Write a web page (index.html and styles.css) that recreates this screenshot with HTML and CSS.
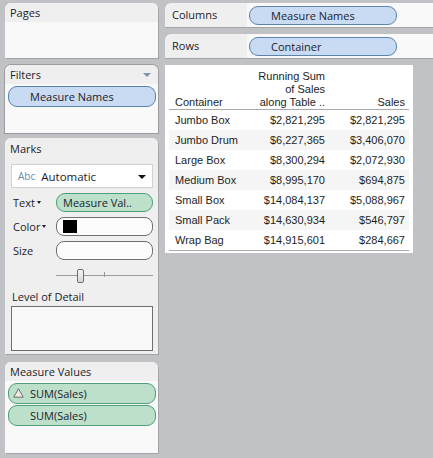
FILE: index.html
```html
<!DOCTYPE html>
<html>
<head>
<meta charset="utf-8">
<link rel="stylesheet" href="styles.css">
</head>
<body>
<div class="app">
  <div class="left">
    <section class="card pages">
      <div class="card-h">Pages</div>
      <div class="card-b"></div>
    </section>
    <section class="card filters">
      <div class="card-h">Filters<span class="hdr-tri"></span></div>
      <div class="card-b">
        <div class="pill blue wide">Measure Names</div>
      </div>
    </section>
    <section class="card marks">
      <div class="card-h">Marks</div>
      <div class="dropdown"><span class="abc">Abc</span><span class="dd-text">Automatic</span><span class="dd-tri"></span></div>
      <div class="mrow"><span class="mlabel">Text<span class="small-tri"></span></span><div class="pill green short">Measure Val..</div></div>
      <div class="mrow"><span class="mlabel">Color<span class="small-tri"></span></span><div class="slot"><span class="swatch"></span></div></div>
      <div class="mrow"><span class="mlabel">Size</span><div class="slot"></div></div>
      <div class="slider"><span class="track"></span><span class="tick"></span><span class="thumb"></span></div>
      <div class="lod-label">Level of Detail</div>
      <div class="lod-box"></div>
    </section>
    <section class="card mv">
      <div class="card-h">Measure Values</div>
      <div class="card-b mv-b">
        <div class="pill green wide"><svg class="delta" width="11" height="10" viewBox="0 0 11 10"><path d="M5.5 0.8 L10.3 9.2 L0.7 9.2 Z" fill="#ecebe2" stroke="#6f6f6f" stroke-width="1"/></svg>SUM(Sales)</div>
        <div class="pill green wide">SUM(Sales)</div>
      </div>
    </section>
  </div>
  <div class="right">
    <div class="shelf">
      <div class="shelf-l">Columns</div>
      <div class="shelf-b"><div class="pill blue shelf-pill">Measure Names</div></div>
    </div>
    <div class="shelf">
      <div class="shelf-l">Rows</div>
      <div class="shelf-b"><div class="pill blue shelf-pill">Container</div></div>
    </div>
    <div class="table-wrap">
      <table class="data">
        <thead>
          <tr><th class="c1">Container</th><th class="c2">Running Sum<br>of Sales<br>along Table ..</th><th class="c3">Sales</th></tr>
        </thead>
        <tbody>
          <tr><td class="c1">Jumbo Box</td><td class="c2">$2,821,295</td><td class="c3">$2,821,295</td></tr>
          <tr><td class="c1">Jumbo Drum</td><td class="c2">$6,227,365</td><td class="c3">$3,406,070</td></tr>
          <tr><td class="c1">Large Box</td><td class="c2">$8,300,294</td><td class="c3">$2,072,930</td></tr>
          <tr><td class="c1">Medium Box</td><td class="c2">$8,995,170</td><td class="c3">$694,875</td></tr>
          <tr><td class="c1">Small Box</td><td class="c2">$14,084,137</td><td class="c3">$5,088,967</td></tr>
          <tr><td class="c1">Small Pack</td><td class="c2">$14,630,934</td><td class="c3">$546,797</td></tr>
          <tr><td class="c1">Wrap Bag</td><td class="c2">$14,915,601</td><td class="c3">$284,667</td></tr>
        </tbody>
      </table>
    </div>
  </div>
</div>
</body>
</html>
```

FILE: styles.css
```css
* { box-sizing: border-box; }
html, body { margin: 0; padding: 0; }
body {
  background: #c1c2c6;
  width: 433px;
  height: 458px;
  overflow: hidden;
  font-family: "Open Sans", "Noto Sans", sans-serif;
  font-size: 11px;
  color: #1c1c2a;
}
.app {
  display: grid;
  grid-template-columns: 153px 268px;
  column-gap: 7px;
  padding: 3px 0 0 5px;
}
.left { display: flex; flex-direction: column; }
.card {
  background: #f9f9f9;
  border-radius: 6px 6px 0 0;
  box-shadow: 1px 1px 0 #a3a4a8;
  overflow: hidden;
}
.card-h {
  height: 19px;
  line-height: 19px;
  padding-left: 5px;
  background: #efefef;
  position: relative;
}
.pages { height: 55px; }
.filters {
  margin-top: 7px;
  height: 68px;
  box-shadow: 0 0 0 1px #9b9ca0;
}
.hdr-tri {
  position: absolute;
  right: 7px;
  top: 8px;
  border-left: 4px solid transparent;
  border-right: 4px solid transparent;
  border-top: 4px solid #7f93ab;
}
.card-b { padding: 2px 2px 0 3px; }
.pill {
  height: 21px;
  line-height: 19px;
  border: 1px solid;
  border-radius: 9px;
  white-space: nowrap;
}
.blue { background: #c9dbf3; border-color: #5a84ae; }
.green { background: #bde0cb; border-color: #4e9f79; }
.wide { padding-left: 21px; position: relative; }
.marks {
  margin-top: 5px;
  height: 216px;
  background: #efefef;
}
.marks .card-h { height: 20px; line-height: 21px; }
.dropdown {
  margin: 6px 0 0 6px;
  width: 142px;
  height: 24px;
  background: #fff;
  border: 1px solid #d2d2d2;
  display: flex;
  align-items: center;
  padding-left: 6px;
  position: relative;
}
.abc {
  color: #6f88a8;
  font-size: 10px;
  margin-right: 6px;
}
.dd-text { font-size: 11.5px; }
.dd-tri {
  position: absolute;
  right: 6px;
  top: 10px;
  border-left: 4px solid transparent;
  border-right: 4px solid transparent;
  border-top: 4px solid #111;
}
.mrow {
  display: flex;
  align-items: center;
  height: 19px;
  margin-top: 5px;
}
.mrow:first-of-type { margin-top: 6px; }
.mlabel {
  width: 51px;
  padding-left: 8px;
  display: flex;
  align-items: center;
}
.small-tri {
  margin-left: 2px;
  border-left: 2.5px solid transparent;
  border-right: 2.5px solid transparent;
  border-top: 3px solid #222;
}
.short {
  width: 97px;
  height: 19px;
  line-height: 17px;
  padding-left: 6px;
}
.slot {
  width: 97px;
  height: 19px;
  background: #fcfcfc;
  border: 1px solid #707070;
  border-radius: 8px;
  display: flex;
  align-items: center;
  padding-left: 6px;
}
.swatch { width: 14px; height: 13px; background: #000; }
.slider {
  position: relative;
  margin: 9px 0 0 51px;
  width: 97px;
  height: 14px;
}
.track {
  position: absolute;
  left: 0; right: 0; top: 6px;
  height: 1px;
  background: #9a9a9a;
}
.tick {
  position: absolute;
  left: 48px; top: 3px;
  width: 1px; height: 5px;
  background: #9a9a9a;
}
.thumb {
  position: absolute;
  left: 21px; top: 0;
  width: 7px; height: 14px;
  background: linear-gradient(#f4f4f4, #d8d8d8);
  border: 1px solid #6e6e6e;
  border-radius: 2px;
}
.lod-label { margin: 7px 0 0 7px; line-height: 14px; }
.lod-box {
  margin: 2px 0 0 6px;
  width: 142px;
  height: 45px;
  background: #f9f9f9;
  border: 1px solid #6e6e6e;
}
.mv {
  margin-top: 8px;
  height: 91px;
}
.mv-b { display: flex; flex-direction: column; gap: 1px; }
.delta { position: absolute; left: 4px; top: 4px; }

.right { display: flex; flex-direction: column; }
.shelf {
  display: flex;
  height: 24px;
  border-radius: 6px 0 0 0;
  overflow: hidden;
  box-shadow: 0 1px 0 #a3a4a8;
  margin-bottom: 7px;
}
.shelf-l {
  width: 82px;
  background: #efefef;
  padding-left: 7px;
  line-height: 23px;
}
.shelf-b {
  flex: 1;
  background: #f9f9f9;
  padding: 3px 0 0 2px;
}
.shelf-pill {
  width: 148px;
  height: 19px;
  line-height: 17px;
  padding-left: 21px;
}
.table-wrap {
  width: 248px;
  background: #fff;
  padding: 0 4px 2px 4px;
}
.data {
  border-collapse: collapse;
  width: 240px;
  font-family: "Liberation Sans", Arial, sans-serif;
  font-size: 11px;
  color: #1e1e1e;
}
.data th {
  font-weight: normal;
  vertical-align: bottom;
  line-height: 13px;
  padding: 5px 0 0 0;
  border-bottom: 1px solid #a9a9a9;
}
.data td { height: 20px; padding: 0; line-height: 20px; }
.data tbody tr:nth-child(even) { background: #f5f5f5; }
.data tbody tr:last-child td { border-bottom: 1px solid #a9a9a9; }
.c1 { width: 86px; text-align: left; padding-left: 6px !important; }
.c2 { width: 74px; text-align: right; padding-right: 4px !important; }
.c3 { width: 80px; text-align: right; padding-right: 4px !important; }
```
